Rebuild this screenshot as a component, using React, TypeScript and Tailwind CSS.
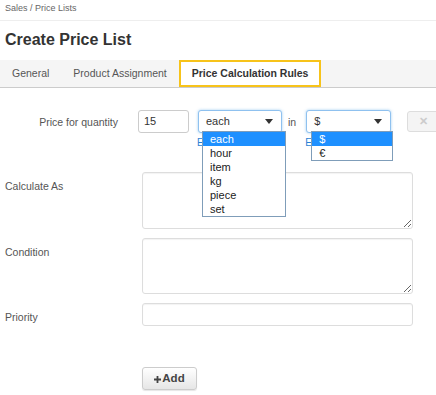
const units = ["each", "hour", "item", "kg", "piece", "set"];
const currencies = ["$", "€"];

const Caret = () => (
	<span className="ml-auto w-0 h-0 border-l-[4px] border-r-[4px] border-t-[5px] border-l-transparent border-r-transparent border-t-[#333]"></span>
);

const Options = ({ items, className }: { items: string[]; className: string }) => (
	<ul className={`absolute top-[21px] z-10 bg-white border border-[#7f9db9] ${className}`}>
		{items.map((item, i) => (
			<li
				key={item}
				className={`h-[14px] leading-[14px] text-[11px] pl-[7px] ${i === 0 ? "bg-[#1e90ff] text-white" : "text-[#222]"}`}
			>
				{item}
			</li>
		))}
	</ul>
);

const Select = ({ value, items, width, listClass }: { value: string; items: string[]; width: string; listClass: string }) => (
	<div className="relative flex flex-col shrink-0">
		<div
			className={`flex items-center h-[23px] ${width} pl-[7px] pr-[8px] bg-white border border-[#8fc1ef] rounded-[3px] shadow-[0_0_3px_rgba(102,175,233,0.6)] text-[11px] text-[#333]`}
		>
			<span>{value}</span>
			<Caret />
		</div>
		<span className="text-[10px] leading-[14px] text-[#2a7fd4] mt-[3px] -ml-[1px]">Edit</span>
		<Options items={items} className={listClass} />
	</div>
);

const Field = ({ label, children }: { label: string; children: React.ReactNode }) => (
	<div className="flex items-start">
		<label className="w-[142px] shrink-0 pl-[5px] pt-[7px] text-[10.5px] leading-[14px] text-[#555]">{label}</label>
		{children}
	</div>
);

export default function App() {
	return (
		<div className="w-[436px] h-[395px] overflow-hidden bg-white font-['Liberation_Sans',Arial,sans-serif]">
			<div className="h-[21px] pl-[5px] pt-[2px] border-b border-[#eee] text-[9px] leading-[12px] text-[#666]">
				Sales / Price Lists
			</div>
			<h1 className="pl-[5px] pt-[9px] pb-[10px] text-[16px] leading-[20px] font-bold text-[#333]">Create Price List</h1>
			<div className="flex h-[28px] bg-[#f5f5f5] border-b border-[#ccc] text-[10.5px] text-[#555]">
				<div className="flex items-center px-3">General</div>
				<div className="flex items-center px-3">Product Assignment</div>
				<div className="flex items-center px-[11px] bg-white border-2 border-[#f7c31a] font-bold text-[#333]">
					Price Calculation Rules
				</div>
			</div>

			<div className="pt-[22px]">
				<div className="flex items-start w-[480px]">
					<label className="w-[118px] shrink-0 text-right pt-[5px] text-[10.5px] leading-[14px] text-[#555]">Price for quantity</label>
					<div className="ml-[20px] shrink-0 w-[51px] h-[23px] flex items-center pl-[5px] border border-[#ccc] rounded-[3px] text-[11px] text-[#333]">
						15
					</div>
					<div className="ml-[9px] shrink-0">
						<Select value="each" items={units} width="w-[84px]" listClass="left-[4px] w-[84px]" />
					</div>
					<span className="ml-[6px] shrink-0 pt-[5px] text-[10.5px] leading-[14px] text-[#555]">in</span>
					<div className="ml-[10px] shrink-0">
						<Select value="$" items={currencies} width="w-[85px]" listClass="left-[5px] w-[82px]" />
					</div>
					<button className="ml-[16px] shrink-0 mt-[1px] w-[40px] h-[21px] flex items-center pl-[11px] bg-[#f4f4f4] border border-[#ddd] rounded-[3px] text-[11px] font-bold text-[#ccc]">
						✕
					</button>
				</div>

				<div className="mt-[22px] flex flex-col gap-[9px]">
					<Field label="Calculate As">
						<textarea className="w-[271px] h-[57px] border border-[#ddd] rounded-[3px] shadow-[inset_0_1px_1px_rgba(0,0,0,0.05)]" />
					</Field>
					<Field label="Condition">
						<textarea className="w-[271px] h-[56px] border border-[#ddd] rounded-[3px] shadow-[inset_0_1px_1px_rgba(0,0,0,0.05)]" />
					</Field>
					<Field label="Priority">
						<input className="w-[271px] h-[23px] border border-[#ddd] rounded-[3px] shadow-[inset_0_1px_1px_rgba(0,0,0,0.05)]" />
					</Field>
				</div>

				<button className="ml-[142px] mt-[41px] w-[55px] h-[23px] flex items-center justify-center gap-[1px] bg-gradient-to-b from-white to-[#e6e6e6] border border-[#ccc] rounded-[3px] shadow-[0_1px_1px_rgba(0,0,0,0.1)] text-[11.5px] font-bold text-[#444]">
					<svg width="7" height="7" viewBox="0 0 7 7" className="mt-[1px]">
						<path d="M2.6 0h1.8v2.6H7v1.8H4.4V7H2.6V4.4H0V2.6h2.6z" fill="#444" />
					</svg>
					<span>Add</span>
				</button>
			</div>
		</div>
	);
}
